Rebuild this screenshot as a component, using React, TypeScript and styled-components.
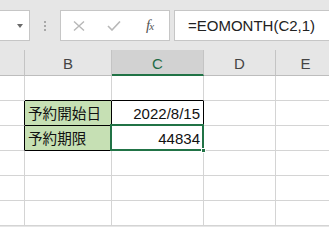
import React from "react";
import styled, { createGlobalStyle } from "styled-components";

const Global = createGlobalStyle`
  html, body { margin: 0; padding: 0; background: #e6e6e6; overflow: hidden; }
  body { font-family: "Liberation Sans", "Noto Sans CJK JP", sans-serif; }
  * { box-sizing: border-box; }
`;

const Page = styled.div`
  width: 329px;
  height: 227px;
  display: flex;
  flex-direction: column;
  overflow: hidden;
  background: #e6e6e6;
`;

const FormulaBar = styled.div`
  display: flex;
  align-items: stretch;
  height: 31px;
  margin-top: 10px;
  margin-bottom: 9px;
`;

const NameBox = styled.div`
  width: 30px;
  background: #fff;
  border: 1px solid #c6c6c6;
  border-left: none;
  display: flex;
  align-items: center;
  justify-content: flex-end;
  padding-right: 6px;
`;

const Caret = styled.div`
  width: 0;
  height: 0;
  border-left: 3.5px solid transparent;
  border-right: 3.5px solid transparent;
  border-top: 4px solid #6a6a6a;
  margin-top: 1px;
`;

const Grip = styled.div`
  width: 30px;
  display: flex;
  flex-direction: column;
  align-items: center;
  justify-content: center;
  gap: 2px;
`;

const Dot = styled.span`
  width: 2px;
  height: 2px;
  background: #a8a8a8;
`;

const IconBox = styled.div`
  width: 110px;
  background: #fff;
  border: 1px solid #c6c6c6;
  display: flex;
  align-items: center;
  padding-left: 12px;
  gap: 22px;
`;

const Fx = styled.span`
  font-family: "Liberation Serif", serif;
  font-style: italic;
  font-size: 15px;
  color: #555;
  letter-spacing: -1px;
  margin-left: 3px;
  & > small { font-size: 11px; }
`;

const FormulaInput = styled.div`
  flex: 1;
  margin-left: 4px;
  margin-right: -2px;
  background: #fff;
  border: 1px solid #c6c6c6;
  display: flex;
  align-items: center;
  padding-left: 13px;
  font-family: "Liberation Sans", sans-serif;
  font-size: 15px;
  color: #222;
`;

const Sheet = styled.div`
  display: grid;
  grid-template-columns: 25px 87px 92px 72px 60px;
  grid-template-rows: 26px repeat(6, 25px);
  position: relative;
  background: #fff;
`;

const Head = styled.div<{ $sel?: boolean; $last?: boolean }>`
  background: ${(p) => (p.$sel ? "#d2d2d2" : "#e6e6e6")};
  border-right: 1px solid ${(p) => (p.$last ? "transparent" : "#c4c4c4")};
  border-bottom: ${(p) => (p.$sel ? "2px solid #217346" : "1px solid #bdbdbd")};
  display: flex;
  align-items: center;
  justify-content: center;
  font-size: 15px;
  color: ${(p) => (p.$sel ? "#1f6b45" : "#444")};
  padding-top: 2px;
`;

const Cell = styled.div<{
  $fill?: string;
  $r?: string;
  $b?: string;
  $align?: "left" | "right";
}>`
  background: ${(p) => p.$fill || "#fff"};
  border-right: 1px solid ${(p) => p.$r || "#d4d4d4"};
  border-bottom: 1px solid ${(p) => p.$b || "#d4d4d4"};
  display: flex;
  align-items: center;
  justify-content: ${(p) => (p.$align === "right" ? "flex-end" : "flex-start")};
  padding: 1px 3px 0 3px;
  font-size: 15px;
  color: #111;
  white-space: nowrap;
  overflow: visible;
`;

const Jp = styled.span`
  font-family: "Noto Sans CJK JP", sans-serif;
  font-size: 14.6px;
  line-height: 1;
`;

const Selection = styled.div`
  position: absolute;
  left: 110px;
  top: 74px;
  width: 94px;
  height: 27px;
  border: 2px solid #217346;
  pointer-events: none;
`;

const Handle = styled.div`
  position: absolute;
  left: 201px;
  top: 98px;
  width: 5px;
  height: 5px;
  background: #217346;
  border: 1px solid #fff;
`;

const GREEN = "#c6e0b4";
const BLACK = "#000";

type C = { text?: React.ReactNode; fill?: string; r?: string; b?: string; align?: "left" | "right" };

const rows: C[][] = [
  [{}, { b: BLACK }, { b: BLACK }, {}, {}],
  [
    { r: BLACK },
    { text: <Jp>予約開始日</Jp>, fill: GREEN, r: BLACK, b: BLACK },
    { text: "2022/8/15", r: BLACK, b: BLACK, align: "right" },
    {},
    {},
  ],
  [
    { r: BLACK },
    { text: <Jp>予約期限</Jp>, fill: GREEN, r: BLACK, b: BLACK },
    { text: "44834", r: BLACK, b: BLACK, align: "right" },
    {},
    {},
  ],
  [{}, {}, {}, {}, {}],
  [{}, {}, {}, {}, {}],
  [{}, {}, {}, {}, {}],
];

export default function App() {
  return (
    <Page>
      <Global />
      <FormulaBar>
        <NameBox>
          <Caret />
        </NameBox>
        <Grip>
          <Dot />
          <Dot />
          <Dot />
        </Grip>
        <IconBox>
          <svg width="12" height="10" viewBox="0 0 12 10">
            <path d="M1 0.5 L11 9.5 M11 0.5 L1 9.5" stroke="#b8b8b8" strokeWidth="1.4" fill="none" />
          </svg>
          <svg width="14" height="10" viewBox="0 0 14 10">
            <path d="M1 5 L5 9 L13 0.5" stroke="#b8b8b8" strokeWidth="1.6" fill="none" />
          </svg>
          <Fx>
            f<small>x</small>
          </Fx>
        </IconBox>
        <FormulaInput>=EOMONTH(C2,1)</FormulaInput>
      </FormulaBar>
      <Sheet>
        <Head />
        <Head>B</Head>
        <Head $sel>C</Head>
        <Head>D</Head>
        <Head $last>E</Head>
        {rows.map((row, i) =>
          row.map((c, j) => (
            <Cell key={`${i}-${j}`} $fill={c.fill} $r={c.r} $b={c.b} $align={c.align}>
              {c.text}
            </Cell>
          ))
        )}
        <Selection />
        <Handle />
      </Sheet>
    </Page>
  );
}
